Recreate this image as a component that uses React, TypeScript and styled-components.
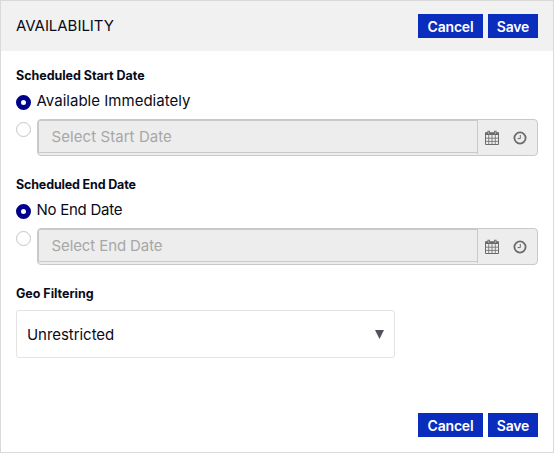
import React from "react";
import styled, { createGlobalStyle } from "styled-components";

const GlobalStyle = createGlobalStyle`
  *, *::before, *::after { box-sizing: border-box; }
  body {
    margin: 0;
    background: #fff;
    color: #080b19;
    font-family: Inter, "Liberation Sans", sans-serif;
  }
`;

const Panel = styled.main`
  display: flex;
  flex-direction: column;
  height: 453px;
  border: 1px solid #d9d9d9;
  background: #fff;
`;

const Header = styled.header`
  display: flex;
  align-items: center;
  justify-content: space-between;
  height: 50px;
  padding: 0 15px;
  background: #f1f1f1;
`;

const Title = styled.h1`
  margin: 0;
  font-size: 15px;
  font-weight: 400;
  line-height: 20px;
  letter-spacing: -0.04px;
`;

const ButtonRow = styled.div`
  display: flex;
  gap: 5px;
`;

const Button = styled.button<{ $width: number }>`
  width: ${(p) => p.$width}px;
  height: 24px;
  padding: 2px 0 0;
  border: 0;
  background: #0a2dbd;
  color: #fff;
  font-family: inherit;
  font-size: 14px;
  font-weight: 600;
  line-height: 22px;
  letter-spacing: -0.2px;
`;

const Body = styled.div`
  display: flex;
  flex: 1;
  flex-direction: column;
  padding: 15px 15px 0;
`;

const Section = styled.section`
  height: 109px;
`;

const Heading = styled.h2<{ $spacing: number }>`
  margin: 0;
  height: 19px;
  font-size: 12.5px;
  font-weight: 700;
  line-height: 19px;
  letter-spacing: ${(p) => p.$spacing}px;
  white-space: nowrap;
`;

const Option = styled.label<{ $spacing: number }>`
  display: flex;
  gap: 5.5px;
  height: 34px;
  padding-top: 5px;
  font-size: 15px;
  line-height: 22px;
  letter-spacing: ${(p) => p.$spacing}px;
`;

const Radio = styled.span<{ $checked?: boolean }>`
  flex: none;
  width: 15px;
  height: 15px;
  margin-top: 5px;
  border: ${(p) => (p.$checked ? "5px solid #00008b" : "1px solid #c6c6c6")};
  border-radius: 50%;
  background: #fff;
`;

const DateRow = styled.div`
  display: flex;
  gap: 6px;

  ${Radio} { margin-top: 3px; }
`;

const DateGroup = styled.div`
  display: flex;
  flex: 1;
  height: 37px;
  border: 1px solid #c9c9c9;
  border-radius: 4px;
  background: #ededed;
`;

const DateInput = styled.div<{ $spacing: number }>`
  width: 439px;
  height: 33px;
  padding-left: 12.5px;
  border: 1px solid #c9c9c9;
  border-right: 0;
  border-radius: 2px 0 0 0;
  color: #a7a7a7;
  font-size: 15px;
  line-height: 32px;
  letter-spacing: ${(p) => p.$spacing}px;
`;

const Actions = styled.div`
  display: flex;
  align-items: center;
  gap: 14px;
  height: 34px;
  padding: 1px 0 0 7px;
  border-left: 1px solid #c9c9c9;
`;

const Select = styled.div`
  display: flex;
  align-items: center;
  justify-content: space-between;
  width: 379px;
  height: 48px;
  margin-top: 7px;
  padding: 0 10px;
  border: 1px solid #e3e3e3;
  border-radius: 3px;
  font-size: 15px;
  letter-spacing: -0.05px;
`;

const Footer = styled.footer`
  display: flex;
  justify-content: flex-end;
  padding: 0 15px 15px;
`;

const CalendarIcon = () => (
  <svg width="14" height="16" viewBox="0 0 14 16" fill="none" stroke="#6b6b6b">
    <path d="M.5 3h13v11.5H.5z" />
    <path d="M0 3.7h14" strokeWidth="2.6" />
    <path d="M3.7 5v9.5M7 5v9.5M10.3 5v9.5M1 8.2h12M1 11.4h12" strokeWidth=".8" />
    <path d="M3.7.8v3.7M10.3.8v3.7" strokeWidth="2.5" />
    <path d="M3.7 1.5v2.5M10.3 1.5v2.5" stroke="#c4c4c4" strokeWidth=".8" />
  </svg>
);

const ClockIcon = () => (
  <svg width="14" height="14" viewBox="0 0 14 14" fill="none" stroke="#6b6b6b">
    <circle cx="7" cy="7" r="5.6" strokeWidth="1.8" />
    <path d="M7.3 4v3.6H4.6" strokeWidth="1" />
  </svg>
);

const Toolbar = () => (
  <ButtonRow>
    <Button $width={65}>Cancel</Button>
    <Button $width={50}>Save</Button>
  </ButtonRow>
);

interface ScheduleProps {
  heading: string;
  option: string;
  placeholder: string;
  spacing: [number, number, number];
}

const Schedule = ({ heading, option, placeholder, spacing }: ScheduleProps) => (
  <Section>
    <Heading $spacing={spacing[0]}>{heading}</Heading>
    <Option $spacing={spacing[1]}>
      <Radio $checked />
      {option}
    </Option>
    <DateRow>
      <Radio />
      <DateGroup>
        <DateInput $spacing={spacing[2]}>{placeholder}</DateInput>
        <Actions>
          <CalendarIcon />
          <ClockIcon />
        </Actions>
      </DateGroup>
    </DateRow>
  </Section>
);

export default function App() {
  return (
    <>
      <GlobalStyle />
      <Panel>
        <Header>
          <Title>AVAILABILITY</Title>
          <Toolbar />
        </Header>
        <Body>
          <Schedule
            heading="Scheduled Start Date"
            option="Available Immediately"
            placeholder="Select Start Date"
            spacing={[-0.03, 0.02, 0.07]}
          />
          <Schedule
            heading="Scheduled End Date"
            option="No End Date"
            placeholder="Select End Date"
            spacing={[-0.15, -0.26, -0.1]}
          />
          <Heading $spacing={-0.03}>Geo Filtering</Heading>
          <Select>
            Unrestricted
            <svg width="9" height="9" viewBox="0 0 9 9">
              <path d="M0 0h9L4.5 9z" fill="#50535b" />
            </svg>
          </Select>
        </Body>
        <Footer>
          <Toolbar />
        </Footer>
      </Panel>
    </>
  );
}
